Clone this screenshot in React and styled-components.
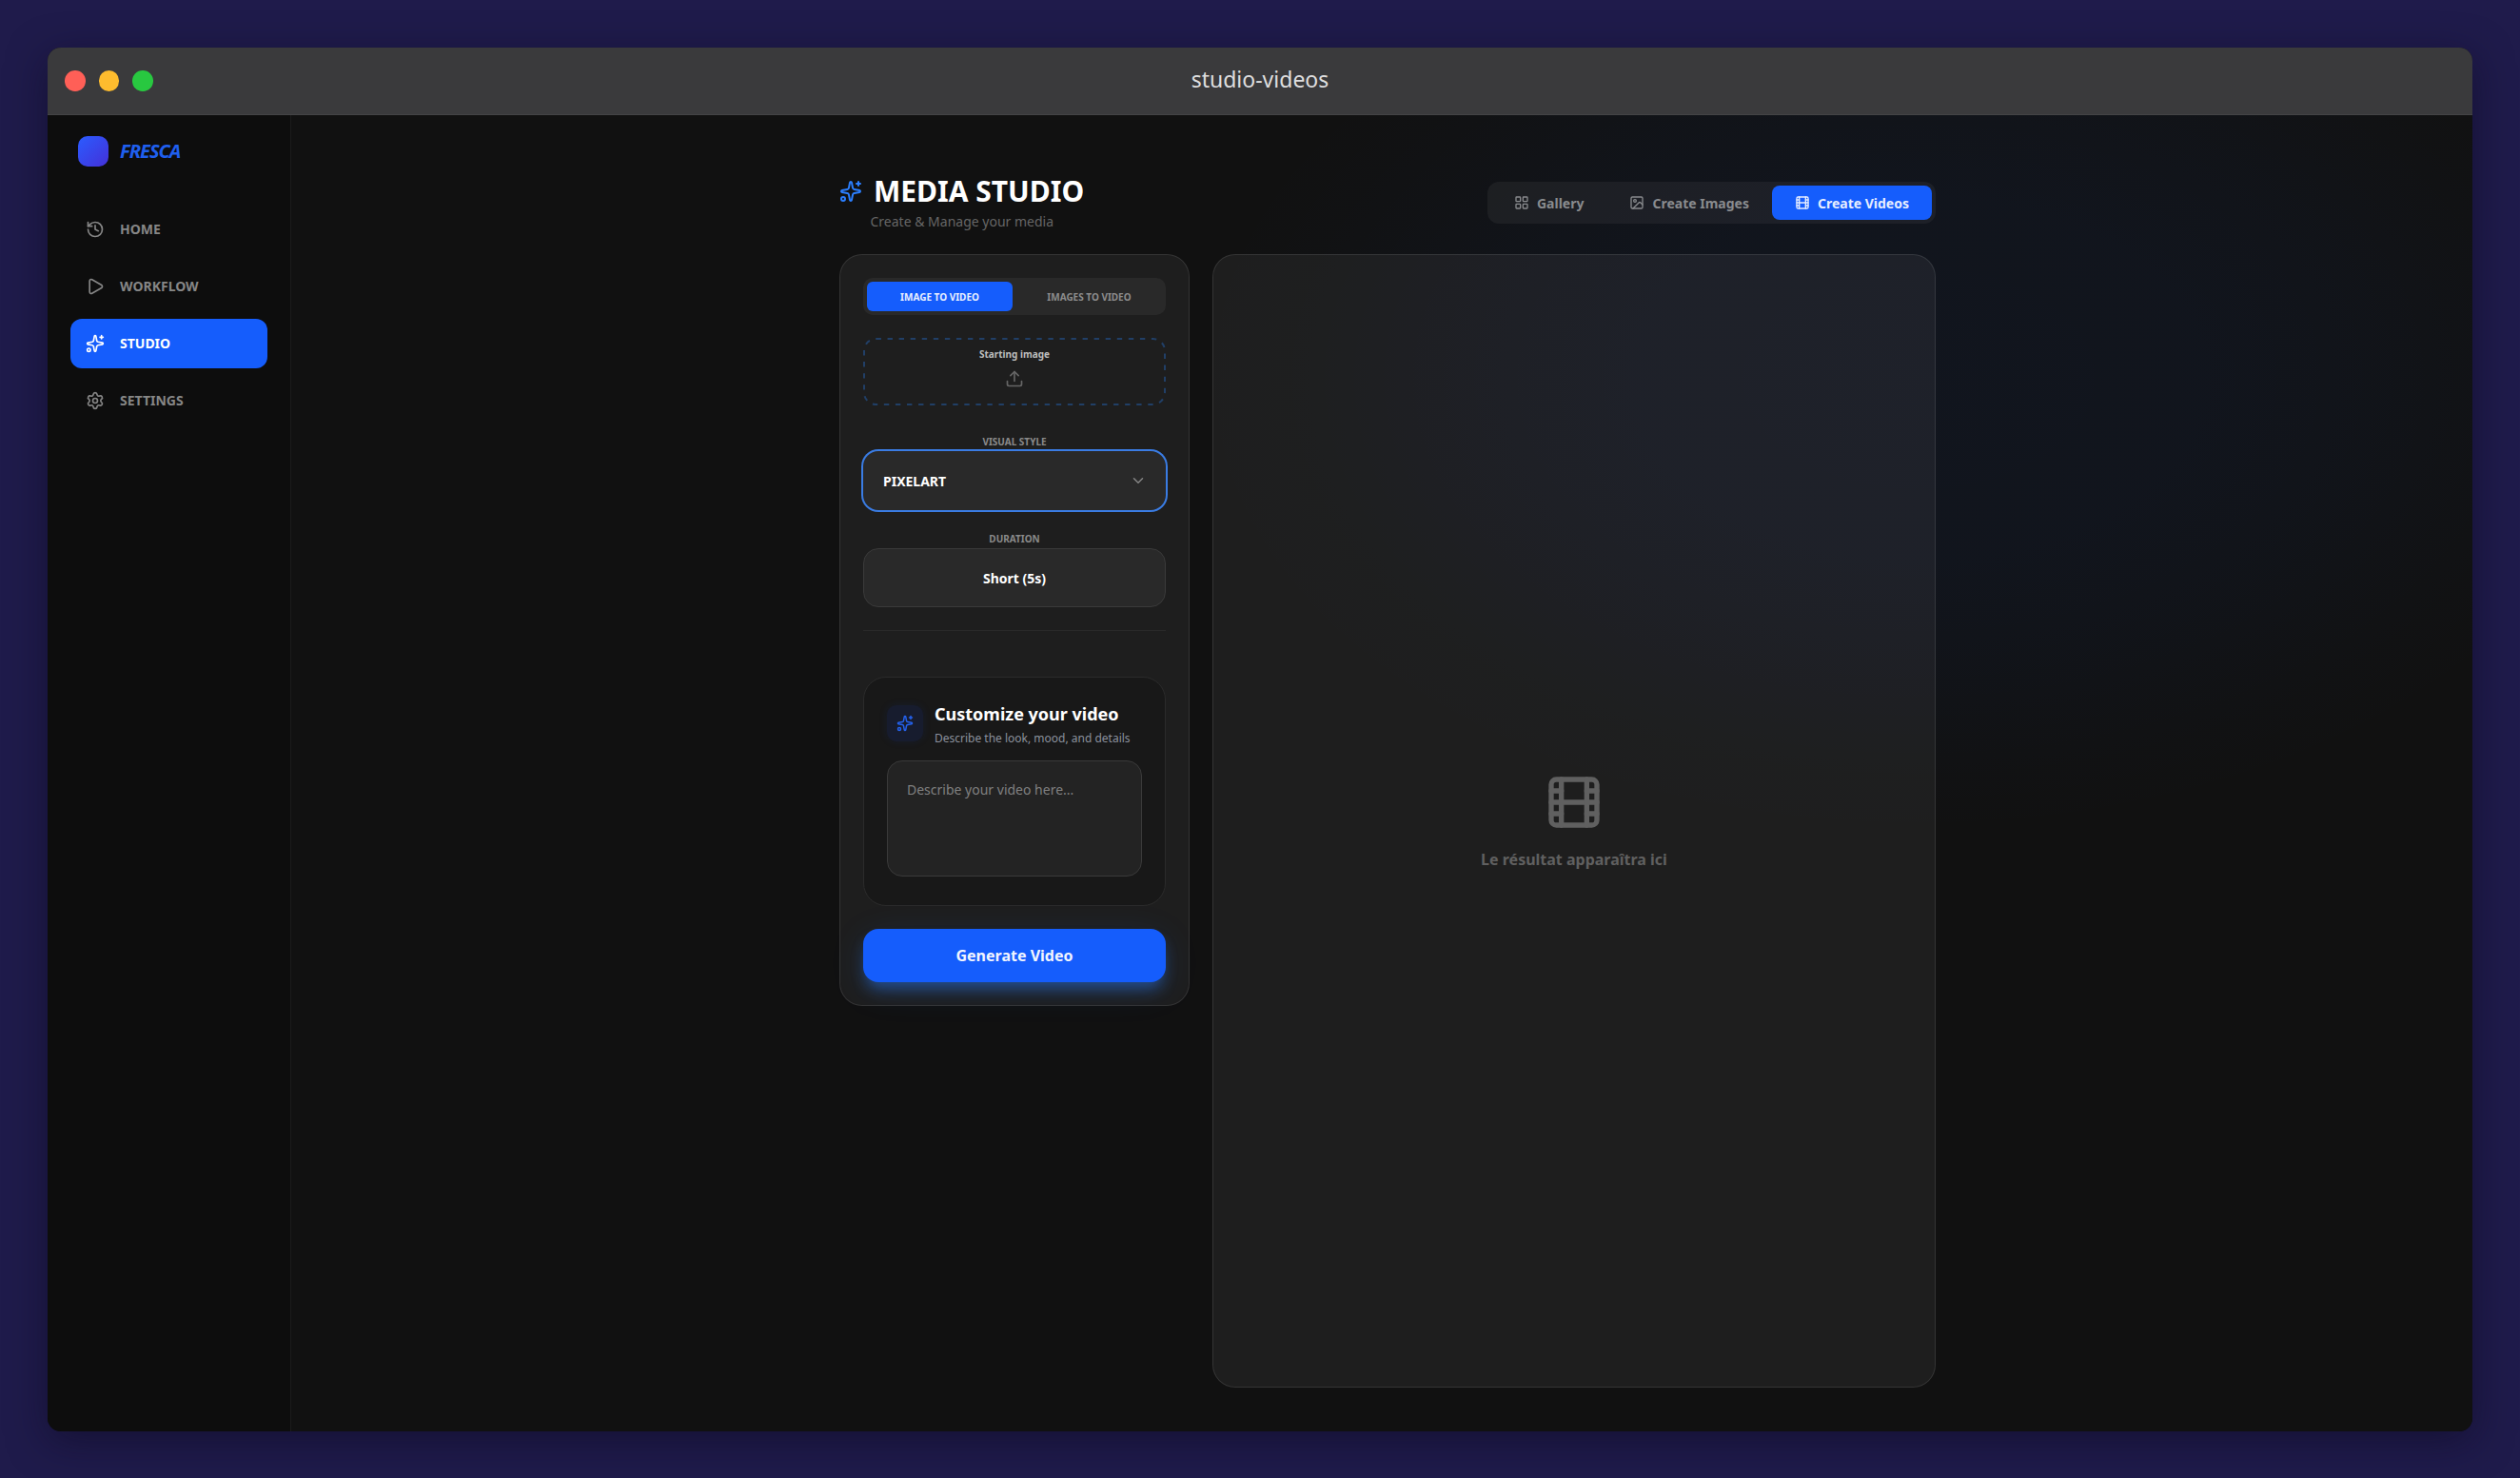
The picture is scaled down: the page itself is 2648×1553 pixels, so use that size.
import React from 'react';
import styled, { createGlobalStyle } from 'styled-components';
import {
  ChevronDown,
  Film,
  History,
  Image as ImageIcon,
  LayoutGrid,
  Play,
  Settings,
  Sparkles,
  Upload,
} from 'lucide-react';

const BLUE = '#155dfc';
const FONT = "'Noto Sans', 'Open Sans', sans-serif";

const GlobalStyle = createGlobalStyle`
  *, *::before, *::after {
    box-sizing: border-box;
  }

  body {
    margin: 0;
    background: #1f1b4b;
    color: #fff;
    font-family: ${FONT};
  }

  button, textarea {
    font-family: inherit;
  }
`;

const Desktop = styled.div`
  height: 1553px;
  padding: 50px 50px 49px;
`;

const Window = styled.div`
  display: flex;
  flex-direction: column;
  height: 100%;
  overflow: hidden;
  border-radius: 14px;
  background: #111;
  box-shadow: 0 10px 40px rgba(12, 8, 30, 0.5);
`;

const TitleBar = styled.div`
  display: grid;
  grid-template-columns: 1fr auto 1fr;
  align-items: center;
  flex: none;
  height: 71px;
  padding: 0 18px;
  border-bottom: 1px solid #444446;
  background: #3a3a3c;
`;

const Lights = styled.div`
  display: flex;
  gap: 14px;
`;

const Light = styled.span`
  width: 21.5px;
  height: 21.5px;
  border-radius: 50%;
  background: ${({ color }) => color};
`;

const WindowTitle = styled.span`
  color: #dededf;
  font-size: 23px;
  line-height: 32px;
  margin-top: -4px;
`;

const Shell = styled.div`
  display: flex;
  flex: 1;
  min-height: 0;
`;

const Sidebar = styled.aside`
  width: 256px;
  flex: none;
  padding: 22px 24px;
  border-right: 1px solid #1c1c1c;
  background: #0d0d0d;
`;

const Brand = styled.div`
  display: flex;
  align-items: center;
  gap: 12px;
  padding-left: 8px;
`;

const BrandMark = styled.span`
  width: 32px;
  height: 32px;
  border-radius: 10px;
  background: linear-gradient(135deg, #2b5cff, #4430d8);
`;

const BrandName = styled.span`
  color: #1f5fee;
  font-size: 20px;
  font-style: italic;
  font-weight: 700;
  letter-spacing: -1px;
  line-height: 28px;
`;

const Nav = styled.nav`
  display: flex;
  flex-direction: column;
  gap: 8px;
  margin-top: 40px;
`;

const NavItem = styled.a`
  display: flex;
  align-items: center;
  gap: 16px;
  height: 52px;
  padding: 0 16px;
  border-radius: 12px;
  background: ${({ $active }) => ($active ? BLUE : 'transparent')};
  color: ${({ $active }) => ($active ? '#fff' : '#868686')};
  font-size: 14px;
  font-weight: 700;
  line-height: 20px;
`;

const Main = styled.main`
  flex: 1;
  padding: 62px 0 46px 12px;
  background:
    radial-gradient(
      ellipse 760px 480px at 1710px 276px,
      rgba(21, 93, 252, 0.055),
      rgba(21, 93, 252, 0.05) 40%,
      rgba(21, 93, 252, 0.036) 62%,
      rgba(21, 93, 252, 0.012) 85%,
      transparent
    ),
    #111;
`;

const Content = styled.div`
  display: flex;
  flex-direction: column;
  width: 1152px;
  height: 100%;
  margin: 0 auto;
`;

const Header = styled.header`
  display: flex;
  justify-content: space-between;
  height: 84px;
`;

const Title = styled.h1`
  display: flex;
  align-items: center;
  gap: 12px;
  margin: 0;
  font-size: 30px;
  font-weight: 700;
  line-height: 36px;

  svg {
    color: #2b7fff;
  }
`;

const Subtitle = styled.p`
  margin: 4px 0 0 32.5px;
  color: #666;
  font-size: 14px;
  line-height: 20px;
`;

const PageTabs = styled.div`
  display: flex;
  height: 44px;
  margin-top: 8px;
  padding: 4px;
  border-radius: 12px;
  background: rgba(255, 255, 255, 0.05);
`;

const PageTab = styled.button`
  display: flex;
  align-items: center;
  gap: 8px;
  padding: 0 24px;
  border: 0;
  border-radius: 8px;
  background: ${({ $active }) => ($active ? BLUE : 'transparent')};
  color: ${({ $active }) => ($active ? '#e6edff' : '#898b8e')};
  font-size: 14px;
  font-weight: 700;
`;

const Columns = styled.div`
  display: grid;
  grid-template-columns: 368px 1fr;
  align-items: start;
  gap: 24px;
  flex: 1;
`;

const Panel = styled.section`
  padding: 24px;
  border: 1px solid rgba(255, 255, 255, 0.1);
  border-radius: 24px;
  background: rgba(255, 255, 255, 0.055);
`;

const ModeTabs = styled.div`
  display: grid;
  grid-template-columns: 1fr 1fr;
  gap: 4px;
  height: 39px;
  padding: 4px;
  border-radius: 10px;
  background: #292929;
`;

const ModeTab = styled.button`
  padding: 0;
  border: 0;
  border-radius: 6px;
  background: ${({ $active }) => ($active ? BLUE : 'transparent')};
  color: ${({ $active }) => ($active ? '#e8efff' : '#8c8c8c')};
  font-size: 10px;
  font-weight: 700;
`;

const Dropzone = styled.div`
  position: relative;
  display: flex;
  flex-direction: column;
  align-items: center;
  gap: 8px;
  height: 71px;
  margin-top: 24px;
  padding-top: 10px;
  color: #bdbdbd;
  font-size: 10px;
  font-weight: 700;
  line-height: 15px;
`;

// dashed outline, drawn over the drop zone so the dash length can be set
const DashedOutline = styled.svg`
  position: absolute;
  inset: 0;
  width: 100%;
  height: 100%;
  fill: none;
  stroke: #213f66;
  stroke-width: 2;
  stroke-dasharray: 5.4 6.66;
`;

const UploadIcon = styled(Upload)`
  color: #666;
`;

const Field = styled.div`
  margin-top: ${({ $gap }) => $gap}px;
`;

const Label = styled.div`
  margin-bottom: 2px;
  color: #8a8a8a;
  font-size: 10px;
  font-weight: 700;
  line-height: 15px;
  text-align: center;
`;

const Select = styled.button`
  display: flex;
  align-items: center;
  justify-content: ${({ $centered }) => ($centered ? 'center' : 'space-between')};
  width: 100%;
  height: 62px;
  padding: 0 20px 0 ${({ $centered }) => ($centered ? 20 : 21)}px;
  border: ${({ $focused }) => ($focused ? '0' : '1px solid #3a3a3a')};
  border-radius: 16px;
  background: #292929;
  box-shadow: ${({ $focused }) => ($focused ? '0 0 0 2px #3a7ce3' : 'none')};
  color: #fff;
  font-size: 14px;
  font-weight: 700;

  svg {
    color: #858585;
  }
`;

const Divider = styled.hr`
  height: 1px;
  margin: 24px 0 48px;
  border: 0;
  background: #292929;
`;

const PromptCard = styled.div`
  height: 241px;
  padding: 24px;
  border: 1px solid #2b2b2b;
  border-radius: 24px;
  background: #181818;
`;

const PromptHeader = styled.div`
  display: flex;
  align-items: center;
  gap: 12px;
  height: 48px;
`;

const PromptIcon = styled.span`
  display: flex;
  align-items: center;
  justify-content: center;
  width: 38px;
  height: 38px;
  border-radius: 10px;
  background: #171c2e;
  box-shadow: 0 0 8px rgba(21, 60, 160, 0.15);
  color: #2461ec;
`;

const PromptTitle = styled.h2`
  margin: 0;
  font-size: 18px;
  font-weight: 700;
  line-height: 28px;
`;

const PromptHint = styled.p`
  margin: 4px 0 0;
  color: #8b919d;
  font-size: 12px;
  line-height: 16px;
  white-space: nowrap;
`;

const PromptInput = styled.textarea`
  display: block;
  width: 100%;
  height: 122px;
  margin-top: 15px;
  padding: 20px;
  border: 1px solid #3a3a3a;
  border-radius: 16px;
  background: #232323;
  color: #fff;
  font-size: 14px;
  line-height: 20px;
  resize: none;

  &::placeholder {
    color: #808080;
  }
`;

const GenerateButton = styled.button`
  display: block;
  width: 100%;
  height: 56px;
  margin-top: 24px;
  border: 0;
  border-radius: 16px;
  background: ${BLUE};
  box-shadow:
    0 10px 15px -3px rgba(43, 127, 255, 0.45),
    0 8px 40px -4px rgba(43, 127, 255, 0.16);
  color: #f1f5ff;
  font-size: 16px;
  font-weight: 700;
`;

const Result = styled(Panel)`
  display: flex;
  flex-direction: column;
  align-items: center;
  justify-content: center;
  gap: 16px;
  height: 1191px;
  color: #606060;
  font-size: 16px;
  font-weight: 700;
  line-height: 24px;
`;

const NAV_ITEMS = [
  { label: 'HOME', Icon: History },
  { label: 'WORKFLOW', Icon: Play },
  { label: 'STUDIO', Icon: Sparkles, active: true },
  { label: 'SETTINGS', Icon: Settings },
];

const PAGE_TABS = [
  { label: 'Gallery', Icon: LayoutGrid },
  { label: 'Create Images', Icon: ImageIcon },
  { label: 'Create Videos', Icon: Film, active: true },
];

function App() {
  return (
    <Desktop>
      <GlobalStyle />
      <Window>
        <TitleBar>
          <Lights>
            <Light color="#ff5f57" />
            <Light color="#febc2e" />
            <Light color="#28c840" />
          </Lights>
          <WindowTitle>studio-videos</WindowTitle>
        </TitleBar>
        <Shell>
          <Sidebar>
            <Brand>
              <BrandMark />
              <BrandName>FRESCA</BrandName>
            </Brand>
            <Nav>
              {NAV_ITEMS.map(({ label, Icon, active }) => (
                <NavItem key={label} $active={active}>
                  <Icon size={20} />
                  {label}
                </NavItem>
              ))}
            </Nav>
          </Sidebar>
          <Main>
            <Content>
              <Header>
                <div>
                  <Title>
                    <Sparkles size={24} />
                    MEDIA STUDIO
                  </Title>
                  <Subtitle>Create &amp; Manage your media</Subtitle>
                </div>
                <PageTabs>
                  {PAGE_TABS.map(({ label, Icon, active }) => (
                    <PageTab key={label} $active={active}>
                      <Icon size={16} />
                      {label}
                    </PageTab>
                  ))}
                </PageTabs>
              </Header>
              <Columns>
                <Panel>
                  <ModeTabs>
                    <ModeTab $active>IMAGE TO VIDEO</ModeTab>
                    <ModeTab>IMAGES TO VIDEO</ModeTab>
                  </ModeTabs>
                  <Dropzone>
                    <DashedOutline viewBox="0 0 318 71">
                      <rect x="1" y="1" width="316" height="69" rx="12.5" />
                    </DashedOutline>
                    Starting image
                    <UploadIcon size={20} />
                  </Dropzone>
                  <Field $gap={31}>
                    <Label>VISUAL STYLE</Label>
                    <Select $focused>
                      PIXELART
                      <ChevronDown size={18} />
                    </Select>
                  </Field>
                  <Field $gap={23}>
                    <Label>DURATION</Label>
                    <Select $centered>Short (5s)</Select>
                  </Field>
                  <Divider />
                  <PromptCard>
                    <PromptHeader>
                      <PromptIcon>
                        <Sparkles size={18} />
                      </PromptIcon>
                      <div>
                        <PromptTitle>Customize your video</PromptTitle>
                        <PromptHint>Describe the look, mood, and details</PromptHint>
                      </div>
                    </PromptHeader>
                    <PromptInput placeholder="Describe your video here..." />
                  </PromptCard>
                  <GenerateButton>Generate Video</GenerateButton>
                </Panel>
                <Result>
                  <Film size={64} />
                  Le résultat apparaîtra ici
                </Result>
              </Columns>
            </Content>
          </Main>
        </Shell>
      </Window>
    </Desktop>
  );
}

export default App;
